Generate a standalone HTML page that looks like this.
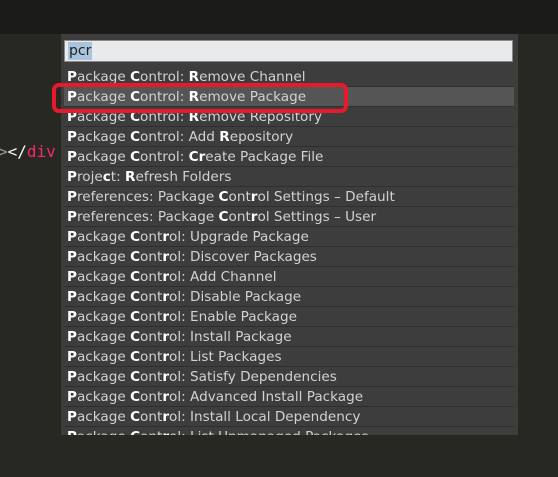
<!DOCTYPE html>
<html><head><style>
body{margin:0;width:558px;height:477px;background:#272822;position:relative;overflow:hidden;font-family:"DejaVu Sans","Liberation Sans",sans-serif;}
.top{position:absolute;left:0;top:0;width:558px;height:34px;background:#1b1b19;}
.code{position:absolute;left:-2px;top:142px;font-family:"DejaVu Sans Mono",monospace;font-size:16px;color:#f8f8f2;}
.panel{position:absolute;left:61px;top:34px;width:457px;height:401px;background:#3d3d3d;overflow:hidden;}
.inp{position:absolute;left:3px;top:6px;width:449px;height:22px;background:#e8eaec;border:1px solid #888;box-sizing:border-box;}
.inp span{position:absolute;left:3px;top:1px;font-size:14px;color:#222;background:#a9c4dd;line-height:18px;padding:0 1px;}
.rows{position:absolute;left:3px;top:33px;width:450px;}
.r{height:19px;border-bottom:1px solid #2f2f2f;color:#d2d2d2;font-size:13.6px;line-height:20px;padding-left:3px;white-space:nowrap;}
.r b{color:#fff;}
.r.s{background:#555;}
.hl{position:absolute;left:52px;top:83px;width:288px;height:22px;border:4px solid #e8192c;border-radius:7px;}
</style></head><body>
<div class="top"></div>
<div class="code"><span style="color:#999">&gt;</span>&lt;/<span style="color:#f92672">div</span></div>
<div class="panel">
<div class="inp"><span>pcr</span></div>
<div class="rows">
<div class="r"><b>P</b>ackage <b>C</b>ontrol: <b>R</b>emove Channel</div>
<div class="r s"><b>P</b>ackage <b>C</b>ontrol: <b>R</b>emove Package</div>
<div class="r"><b>P</b>ackage <b>C</b>ontrol: <b>R</b>emove Repository</div>
<div class="r"><b>P</b>ackage <b>C</b>ontrol: Add <b>R</b>epository</div>
<div class="r"><b>P</b>ackage <b>C</b>ontrol: <b>Cr</b>eate Package File</div>
<div class="r"><b>P</b>roje<b>c</b>t: <b>R</b>efresh Folders</div>
<div class="r"><b>P</b>references: Package <b>C</b>ont<b>r</b>ol Settings – Default</div>
<div class="r"><b>P</b>references: Package <b>C</b>ont<b>r</b>ol Settings – User</div>
<div class="r"><b>P</b>ackage <b>C</b>ont<b>r</b>ol: Upgrade Package</div>
<div class="r"><b>P</b>ackage <b>C</b>ont<b>r</b>ol: Discover Packages</div>
<div class="r"><b>P</b>ackage <b>C</b>ont<b>r</b>ol: Add Channel</div>
<div class="r"><b>P</b>ackage <b>C</b>ont<b>r</b>ol: Disable Package</div>
<div class="r"><b>P</b>ackage <b>C</b>ont<b>r</b>ol: Enable Package</div>
<div class="r"><b>P</b>ackage <b>C</b>ont<b>r</b>ol: Install Package</div>
<div class="r"><b>P</b>ackage <b>C</b>ont<b>r</b>ol: List Packages</div>
<div class="r"><b>P</b>ackage <b>C</b>ont<b>r</b>ol: Satisfy Dependencies</div>
<div class="r"><b>P</b>ackage <b>C</b>ont<b>r</b>ol: Advanced Install Package</div>
<div class="r"><b>P</b>ackage <b>C</b>ont<b>r</b>ol: Install Local Dependency</div>
<div class="r"><b>P</b>ackage <b>C</b>ont<b>r</b>ol: List Unmanaged Packages</div>
</div>
</div>
<div class="hl"></div>
</body></html>
